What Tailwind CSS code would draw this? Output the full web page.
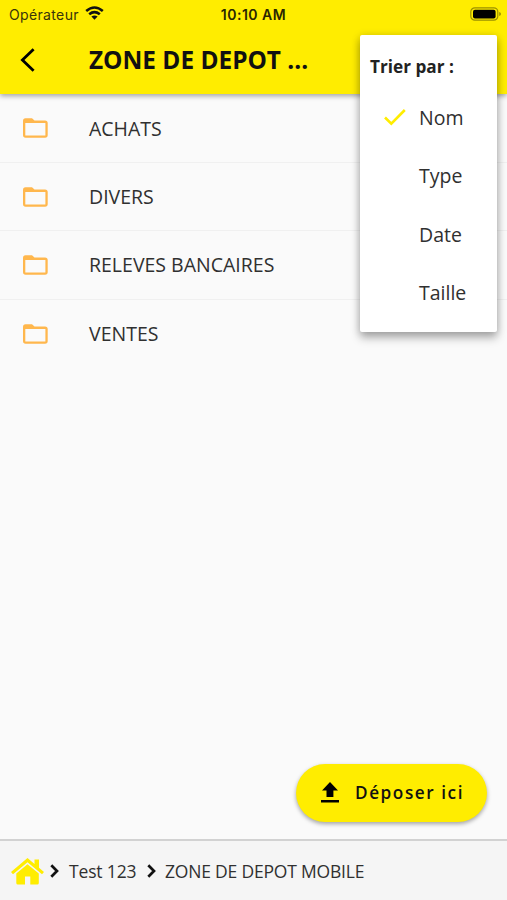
<!DOCTYPE html>
<html lang="fr">
<head>
<meta charset="utf-8">
<title>Zone de dépôt</title>
<script src="https://cdn.jsdelivr.net/npm/@tailwindcss/browser@4"></script>
</head>
<body class="font-['Open_Sans',sans-serif]">
<svg class="hidden">
  <symbol id="folder" viewBox="0 0 25 20"><path d="M0 3Q0 .3 2.5 .3H9L11.5 2.5H22Q24.7 2.5 24.7 5V17Q24.7 19.7 22 19.7H2.6Q0 19.7 0 17ZM2.3 5V17.4H22.4V5Z" fill="#ffb74d" fill-rule="evenodd"/></symbol>
  <symbol id="chevron" viewBox="0 0 9 14"><path d="M1.3 1.2 7 7 1.3 12.8" fill="none" stroke="#111" stroke-width="2.7"/></symbol>
</svg>
<div class="relative flex h-[900px] w-[507px] flex-col overflow-hidden bg-[#fafafa] text-[#303030]">
  <header class="relative h-[94px] shrink-0 bg-[#ffed00] text-[#111] shadow-[0_2px_5px_rgba(0,0,0,0.35)]">
    <div class="grid h-[28px] grid-cols-3 items-center font-[Inter,sans-serif]">
      <div class="flex items-center gap-[6px] pl-[9px]">
        <span class="text-[14px] tracking-[0.35px] text-[#38340a]">Opérateur</span>
        <svg class="-mt-[2px] h-[14px] w-[19px]" viewBox="0 0 19 14" fill="none" stroke="#111" stroke-width="2.6"><path d="M1.2 5Q9.5-2 17.8 5M4.2 8.3Q9.5 4 14.8 8.3"/><path d="M6.4 10.6Q9.5 8.2 12.6 10.6L9.5 13.8Z" fill="#111" stroke="none"/></svg>
      </div>
      <span class="text-center text-[14px] font-semibold tracking-[0.5px] text-[#2a2600]">10:10 AM</span>
      <svg class="mr-[5px] h-[14px] w-[32px] justify-self-end" viewBox="0 0 32 14"><rect x=".8" y=".8" width="27" height="12.4" rx="4" fill="none" stroke="#9b9000" stroke-width="1.2"/><rect x="3" y="2.8" width="22.6" height="8.6" rx="2" fill="#000"/><path d="M29.2 5V9Q31 8.4 31 7T29.2 5Z" fill="#9b9000"/></svg>
    </div>
    <div class="flex h-[64px] items-center pl-[20px]">
      <svg class="h-[24px] w-[15px]" viewBox="0 0 15 24"><path d="M13.6 1.2 2.4 12 13.6 22.8" fill="none" stroke="#000" stroke-width="2.8"/></svg>
      <h1 class="ml-[54px] whitespace-nowrap text-[24.4px] font-bold">ZONE DE DEPOT ...</h1>
    </div>
  </header>
  <main class="flex-1 pt-[0.5px] text-[19.5px]">
    <div class="flex h-[68.4px] items-center border-b border-[#f0f0f0] pl-[23px]"><svg class="h-[20px] w-[25px]"><use href="#folder"/></svg><span class="ml-[41px]">ACHATS</span></div>
    <div class="flex h-[68.4px] items-center border-b border-[#f0f0f0] pl-[23px]"><svg class="h-[20px] w-[25px]"><use href="#folder"/></svg><span class="ml-[41px]">DIVERS</span></div>
    <div class="flex h-[68.4px] items-center border-b border-[#f0f0f0] pl-[23px]"><svg class="h-[20px] w-[25px]"><use href="#folder"/></svg><span class="ml-[41px]">RELEVES BANCAIRES</span></div>
    <div class="flex h-[68.4px] items-center pl-[23px]"><svg class="h-[20px] w-[25px]"><use href="#folder"/></svg><span class="ml-[41px]">VENTES</span></div>
  </main>
  <footer class="flex h-[61px] shrink-0 items-center border-t-2 border-[#d2d2d2] bg-[#f5f5f5] pl-[11px] pt-px text-[17.5px]">
    <svg class="h-[27px] w-[33px]" viewBox="0 0 33 27" fill="#ffed00"><path d="M0 14 16.5 0 23.5 6V1.5H28V9.8L33 14 31 16.3 16.5 4.2 2 16.3Z"/><path d="M5.3 15.5 16.5 6.2 27.8 15.5V25Q27.8 26.5 26.3 26.5H19.3V18.5H14V26.5H6.8Q5.3 26.5 5.3 25Z"/></svg>
    <svg class="ml-[6px] h-[14px] w-[9px]"><use href="#chevron"/></svg>
    <span class="ml-[10px] w-[67px] whitespace-nowrap tracking-[-0.15px]">Test 123</span>
    <svg class="ml-[11px] h-[14px] w-[9px]"><use href="#chevron"/></svg>
    <span class="ml-[9px] whitespace-nowrap tracking-[-0.2px]">ZONE DE DEPOT MOBILE</span>
  </footer>
  <button class="absolute left-[296px] top-[764px] flex h-[58px] w-[191px] items-center rounded-full bg-[#ffed00] pl-[25px] text-[17.2px] font-semibold tracking-[1.55px] text-[#111] shadow-[0_2px_4px_rgba(0,0,0,0.35)]">
    <svg class="-mt-[2px] h-[21px] w-[18px]" viewBox="0 0 18 21"><path d="M9 0 17 8.5H12.4V15H5.5V8.5H1ZM0 18H18V20.5H0Z"/></svg>
    <span class="ml-[16px] whitespace-nowrap">Déposer ici</span>
  </button>
  <div class="absolute left-[360px] top-[35px] h-[297px] w-[137px] rounded-[2px] bg-white pt-[17px] text-[19.5px] shadow-[0_6px_10px_rgba(0,0,0,0.28),0_1px_8px_rgba(0,0,0,0.18)]">
    <div class="flex h-[30px] items-center pl-[10px] text-[17.2px] font-bold text-[#222]">Trier par :</div>
    <div class="flex h-[58.6px] items-center pl-[24px] pt-[12px]"><svg class="h-[18px] w-[22px]" viewBox="0 0 22 18"><path d="M1 9.5 7.3 15.7 20.8 2" fill="none" stroke="#ffed00" stroke-width="2.6"/></svg><span class="ml-[13px]">Nom</span></div>
    <div class="flex h-[58.6px] items-center pl-[59px] pt-[12px]">Type</div>
    <div class="flex h-[58.6px] items-center pl-[59px] pt-[12px]">Date</div>
    <div class="flex h-[58.6px] items-center pl-[59px] pt-[12px]">Taille</div>
  </div>
</div>
</body>
</html>
